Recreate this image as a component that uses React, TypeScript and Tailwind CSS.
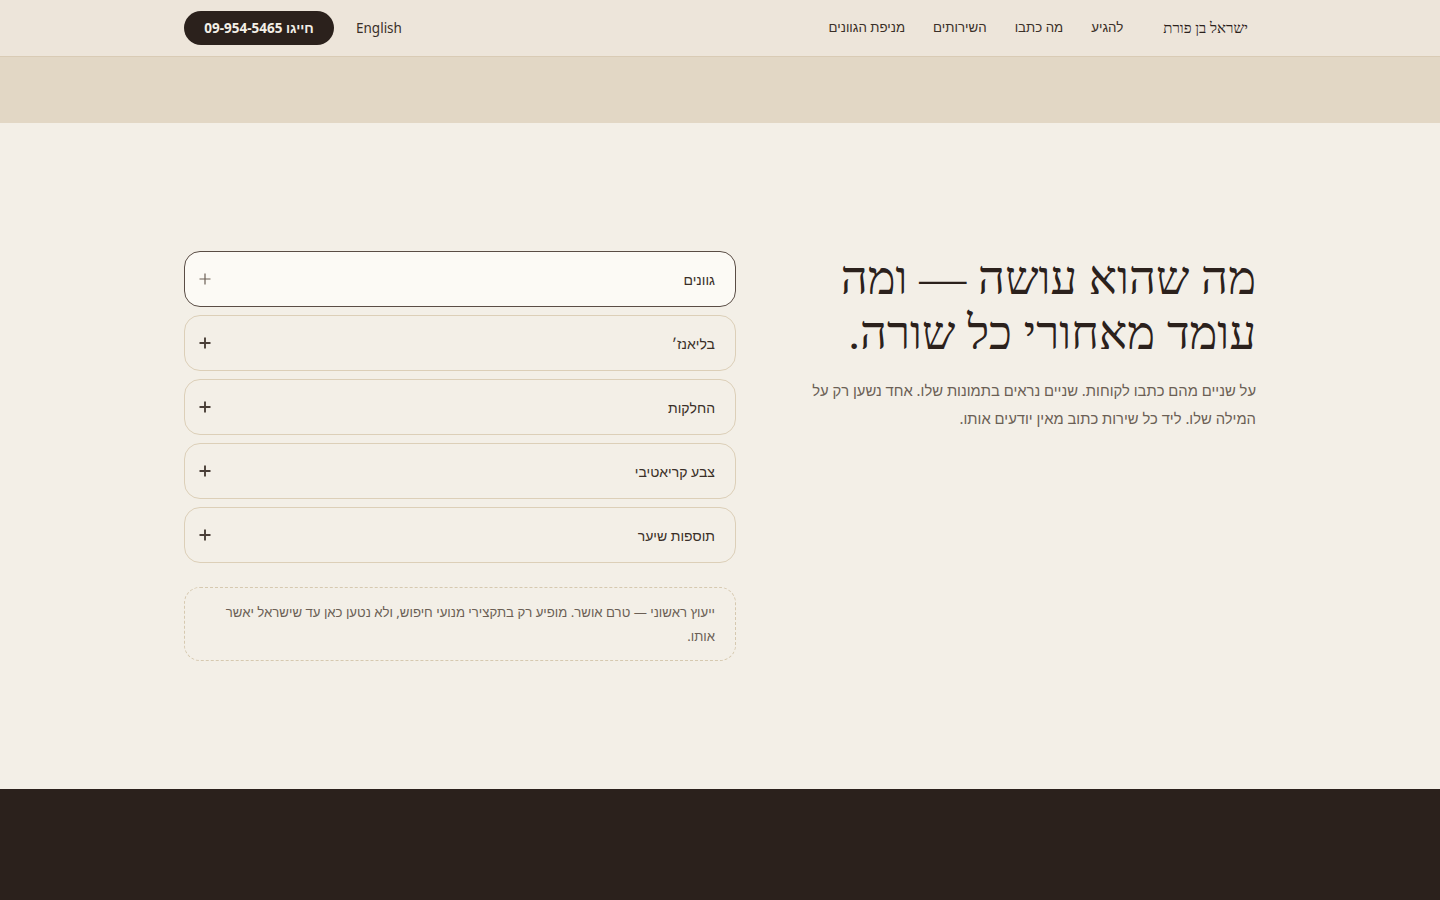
import React from "react";

const items = ["גוונים", "בליאנז׳", "החלקות", "צבע קריאטיבי", "תוספות שיער"];

function Plus({ active }: { active: boolean }) {
  return (
    <svg width="12" height="12" viewBox="0 0 12 12" className="shrink-0">
      <path
        d="M6 0.5V11.5M0.5 6H11.5"
        stroke={active ? "#6b5f55" : "#4a3f38"}
        strokeWidth={active ? 1.2 : 1.9}
        fill="none"
      />
    </svg>
  );
}

export default function App() {
  return (
    <div dir="rtl" className="min-h-screen bg-[#f3efe7] text-[#2b211c] font-['Noto_Sans',sans-serif]">
      <header className="h-[57px] bg-[#ede5da] border-b border-[#d9cbb5]">
        <div className="mx-auto w-[1072px] h-full flex items-center justify-between">
          <div className="flex items-center gap-10">
            <div className="text-[15px] text-[#2b211c] pr-2 font-['Liberation_Serif',serif]">ישראל בן פורת</div>
            <nav className="flex items-center gap-7 text-[13.3px] text-[#3a2f28]">
              <a>להגיע</a>
              <a>מה כתבו</a>
              <a>השירותים</a>
              <a>מניפת הגוונים</a>
            </nav>
          </div>
          <div className="flex items-center gap-[22px]">
            <a className="text-[13.5px] text-[#3a2f28]">English</a>
            <a className="h-[34px] w-[150px] rounded-full bg-[#2b211c] text-[#f3efe7] text-[13.5px] font-bold flex items-center justify-center">חייגו 09-954-5465</a>
          </div>
        </div>
      </header>
      <div className="h-[66px] bg-[#e2d7c5]" />
      <section className="h-[666px]">
        <div className="mx-auto w-[1072px] pt-[128px] flex gap-[72px]">
          <div className="w-[448px]">
            <h1 className="text-[47px] leading-[55px] text-[#2b211c] font-['Liberation_Serif',serif]">
              מה שהוא עושה — ומה עומד מאחורי כל שורה.
            </h1>
            <p className="mt-[15px] text-[14.8px] leading-[28px] text-[#6b5f55]">
              על שניים מהם כתבו לקוחות. שניים נראים בתמונות שלו. אחד נשען רק על המילה שלו. ליד כל שירות כתוב מאין יודעים אותו.
            </p>
          </div>
          <div className="w-[552px]">
            <div className="flex flex-col gap-2">
              {items.map((t, i) => (
                <div
                  key={t}
                  className={
                    i === 0
                      ? "h-[56px] rounded-[16px] border border-[#5a4d45] bg-[#fcfaf5] flex items-center justify-between pr-5 pl-[14px]"
                      : "h-[56px] rounded-[16px] border border-[#dccfb8] flex items-center justify-between pr-5 pl-[14px]"
                  }
                >
                  <span className="text-[14px] text-[#3a2f28]">{t}</span>
                  <Plus active={i === 0} />
                </div>
              ))}
            </div>
            <div className="mt-6 rounded-[16px] border border-dashed border-[#d6c9b0] px-5 py-3 text-[13.2px] leading-[24px] text-[#6b5f55]">
              ייעוץ ראשוני — טרם אושר. מופיע רק בתקצירי מנועי חיפוש, ולא נטען כאן עד שישראל יאשר אותו.
            </div>
          </div>
        </div>
      </section>
      <footer className="h-[111px] bg-[#2b211c]" />
    </div>
  );
}
